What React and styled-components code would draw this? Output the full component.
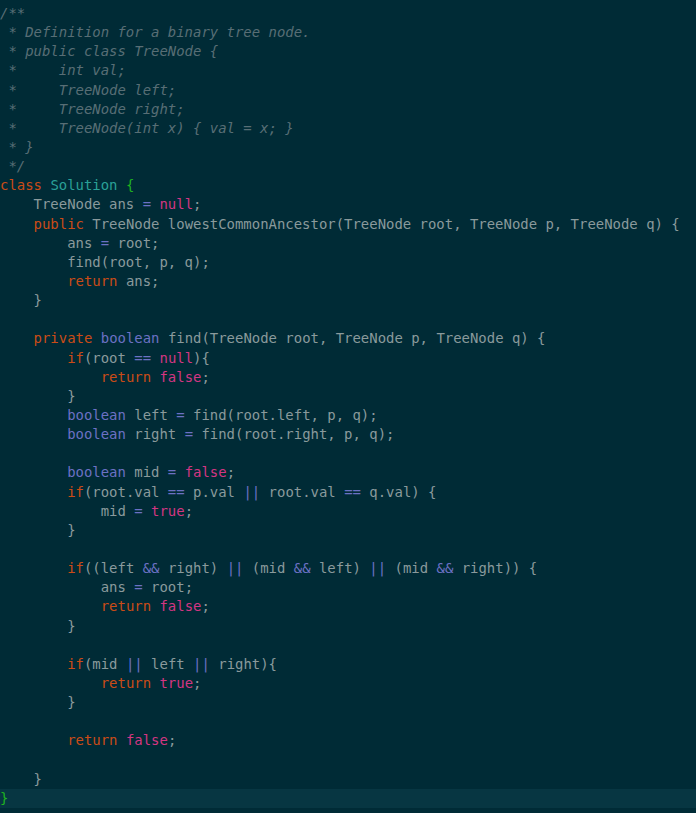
import React from 'react';
import styled, { createGlobalStyle } from 'styled-components';

const GlobalStyle = createGlobalStyle`
  html, body {
    margin: 0;
    padding: 0;
    background: #002b36;
  }
`;

const colors = {
  text: '#8a9a9c',
  comment: '#586e75',
  keyword: '#cb4b16',
  type: '#6c71c4',
  op: '#6c71c4',
  literal: '#d33682',
  cls: '#2aa198',
  brace: '#1fb31f',
};

// each line is a list of [kind, text]
const code = [
  [['comment', '/**']],
  [['comment', ' * Definition for a binary tree node.']],
  [['comment', ' * public class TreeNode {']],
  [['comment', ' *     int val;']],
  [['comment', ' *     TreeNode left;']],
  [['comment', ' *     TreeNode right;']],
  [['comment', ' *     TreeNode(int x) { val = x; }']],
  [['comment', ' * }']],
  [['comment', ' */']],
  [['keyword', 'class'], ['text', ' '], ['cls', 'Solution'], ['text', ' '], ['brace', '{']],
  [['text', '    TreeNode ans '], ['op', '='], ['text', ' '], ['literal', 'null'], ['text', ';']],
  [['text', '    '], ['keyword', 'public'], ['text', ' TreeNode lowestCommonAncestor(TreeNode root, TreeNode p, TreeNode q) {']],
  [['text', '        ans '], ['op', '='], ['text', ' root;']],
  [['text', '        find(root, p, q);']],
  [['text', '        '], ['keyword', 'return'], ['text', ' ans;']],
  [['text', '    }']],
  [],
  [['text', '    '], ['keyword', 'private'], ['text', ' '], ['type', 'boolean'], ['text', ' find(TreeNode root, TreeNode p, TreeNode q) {']],
  [['text', '        '], ['keyword', 'if'], ['text', '(root '], ['op', '=='], ['text', ' '], ['literal', 'null'], ['text', '){']],
  [['text', '            '], ['keyword', 'return'], ['text', ' '], ['literal', 'false'], ['text', ';']],
  [['text', '        }']],
  [['text', '        '], ['type', 'boolean'], ['text', ' left '], ['op', '='], ['text', ' find(root.left, p, q);']],
  [['text', '        '], ['type', 'boolean'], ['text', ' right '], ['op', '='], ['text', ' find(root.right, p, q);']],
  [],
  [['text', '        '], ['type', 'boolean'], ['text', ' mid '], ['op', '='], ['text', ' '], ['literal', 'false'], ['text', ';']],
  [['text', '        '], ['keyword', 'if'], ['text', '(root.val '], ['op', '=='], ['text', ' p.val '], ['op', '||'], ['text', ' root.val '], ['op', '=='], ['text', ' q.val) {']],
  [['text', '            mid '], ['op', '='], ['text', ' '], ['literal', 'true'], ['text', ';']],
  [['text', '        }']],
  [],
  [['text', '        '], ['keyword', 'if'], ['text', '((left '], ['op', '&&'], ['text', ' right) '], ['op', '||'], ['text', ' (mid '], ['op', '&&'], ['text', ' left) '], ['op', '||'], ['text', ' (mid '], ['op', '&&'], ['text', ' right)) {']],
  [['text', '            ans '], ['op', '='], ['text', ' root;']],
  [['text', '            '], ['keyword', 'return'], ['text', ' '], ['literal', 'false'], ['text', ';']],
  [['text', '        }']],
  [],
  [['text', '        '], ['keyword', 'if'], ['text', '(mid '], ['op', '||'], ['text', ' left '], ['op', '||'], ['text', ' right){']],
  [['text', '            '], ['keyword', 'return'], ['text', ' '], ['literal', 'true'], ['text', ';']],
  [['text', '        }']],
  [],
  [['text', '        '], ['keyword', 'return'], ['text', ' '], ['literal', 'false'], ['text', ';']],
  [],
  [['text', '    }']],
  [['brace', '}']],
];

const Editor = styled.div`
  width: 696px;
  height: 813px;
  overflow: hidden;
  background: #002b36;
  padding-top: 4px;
  box-sizing: border-box;
  font-family: "DejaVu Sans Mono", "Liberation Mono", monospace;
  font-size: 13.95px;
`;

const Line = styled.div`
  height: 19.15px;
  line-height: 19.15px;
  white-space: pre;
  color: ${colors.text};
  background: ${(p) => (p.$current ? '#073642' : 'transparent')};
`;

const Token = styled.span`
  color: ${(p) => colors[p.$kind]};
  font-style: ${(p) => (p.$kind === 'comment' ? 'italic' : 'normal')};
`;

function App() {
  return (
    <>
      <GlobalStyle />
      <Editor>
        {code.map((line, i) => (
          <Line key={i} $current={i === code.length - 1}>
            {line.length === 0
              ? ' '
              : line.map(([kind, text], j) => (
                  <Token key={j} $kind={kind}>{text}</Token>
                ))}
          </Line>
        ))}
      </Editor>
    </>
  );
}

export default App;
